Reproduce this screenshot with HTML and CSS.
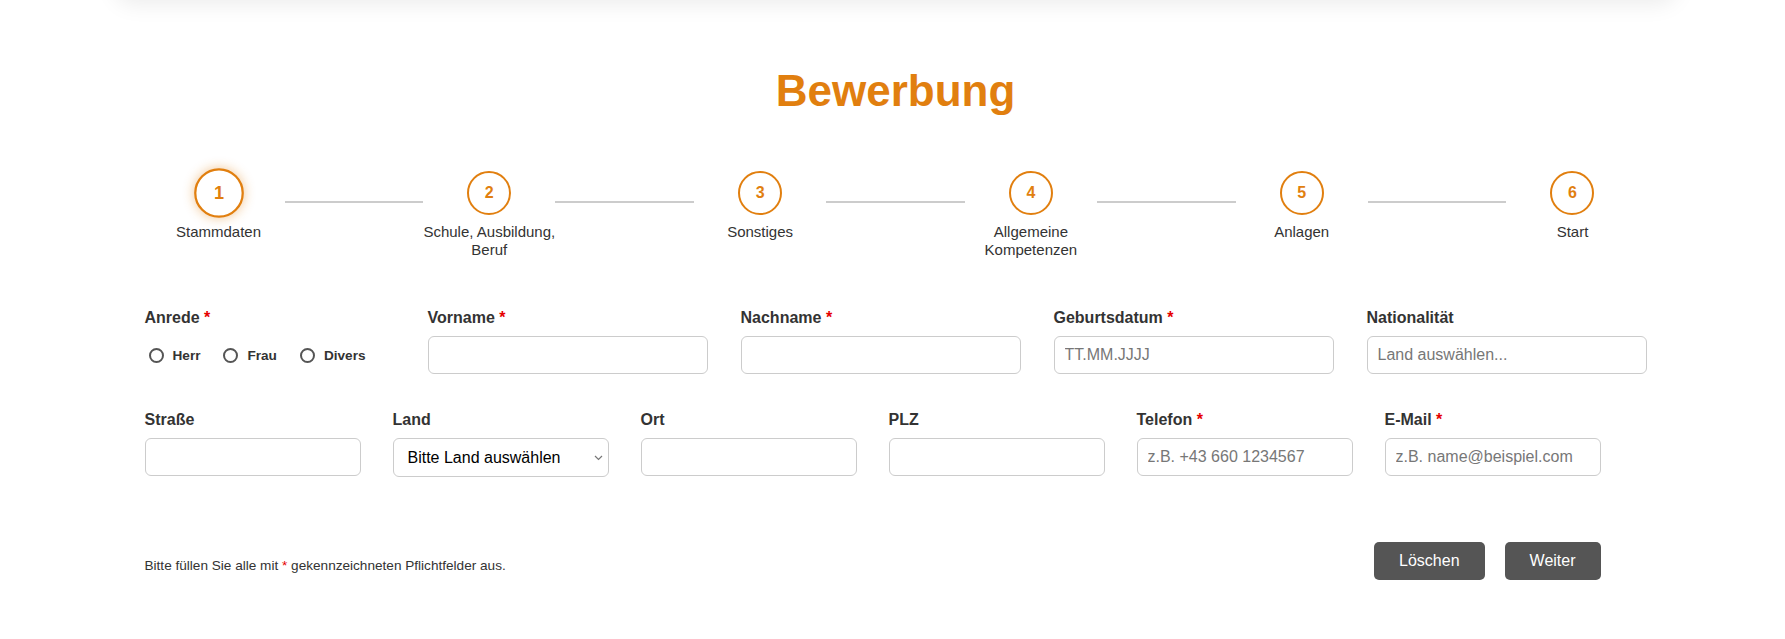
FILE: index.html
```html
<!DOCTYPE html>
<html lang="de">
<head>
  <meta charset="UTF-8" />
  <meta name="viewport" content="width=device-width, initial-scale=1.0"/>
  <title>Bewerbung</title>
  <link rel="stylesheet" href="styles.css">
</head>
<body>
  <div class="topbar"></div>

  <main class="page">
    <h1 class="title">Bewerbung</h1>

    <!-- Steps -->
    <div class="steps">
      <div class="step active">
        <div class="step-circle">1</div>
        <div class="step-label">Stammdaten</div>
      </div>
      <div class="step-line"></div>
      <div class="step">
        <div class="step-circle">2</div>
        <div class="step-label">Schule, Ausbildung, Beruf</div>
      </div>
      <div class="step-line"></div>
      <div class="step">
        <div class="step-circle">3</div>
        <div class="step-label">Sonstiges</div>
      </div>
      <div class="step-line"></div>
      <div class="step">
        <div class="step-circle">4</div>
        <div class="step-label">Allgemeine Kompetenzen</div>
      </div>
      <div class="step-line"></div>
      <div class="step">
        <div class="step-circle">5</div>
        <div class="step-label">Anlagen</div>
      </div>
      <div class="step-line"></div>
      <div class="step">
        <div class="step-circle">6</div>
        <div class="step-label">Start</div>
      </div>
    </div>

    <!-- Stammdaten -->
    <form class="form">
      <div class="row row-main">
        <div class="field">
          <span class="field-label">Anrede <span class="req">*</span></span>
          <div class="radio-group">
            <label class="radio"><input type="radio" name="anrede" value="herr">Herr</label>
            <label class="radio"><input type="radio" name="anrede" value="frau">Frau</label>
            <label class="radio"><input type="radio" name="anrede" value="divers">Divers</label>
          </div>
        </div>
        <div class="field">
          <label class="field-label" for="vorname">Vorname <span class="req">*</span></label>
          <input class="input" id="vorname" type="text" />
        </div>
        <div class="field">
          <label class="field-label" for="nachname">Nachname <span class="req">*</span></label>
          <input class="input" id="nachname" type="text" />
        </div>
        <div class="field">
          <label class="field-label" for="geburtsdatum">Geburtsdatum <span class="req">*</span></label>
          <input class="input" id="geburtsdatum" type="text" placeholder="TT.MM.JJJJ" />
        </div>
        <div class="field">
          <label class="field-label" for="nationalitaet">Nationalität</label>
          <input class="input" id="nationalitaet" type="text" placeholder="Land auswählen..." />
        </div>
      </div>

      <div class="row row-address">
        <div class="field">
          <label class="field-label" for="strasse">Straße</label>
          <input class="input" id="strasse" type="text" />
        </div>
        <div class="field">
          <label class="field-label" for="land">Land</label>
          <div class="select-wrap">
            <select class="input" id="land">
              <option>Bitte Land auswählen</option>
              <option>Österreich</option>
              <option>Deutschland</option>
              <option>Schweiz</option>
            </select>
            <svg class="chevron" width="9" height="6" viewBox="0 0 9 6" aria-hidden="true">
              <path d="M1 1l3.5 3.5L8 1" fill="none" stroke="#777" stroke-width="1.2"/>
            </svg>
          </div>
        </div>
        <div class="field">
          <label class="field-label" for="ort">Ort</label>
          <input class="input" id="ort" type="text" />
        </div>
        <div class="field">
          <label class="field-label" for="plz">PLZ</label>
          <input class="input" id="plz" type="text" />
        </div>
        <div class="field">
          <label class="field-label" for="telefon">Telefon <span class="req">*</span></label>
          <input class="input" id="telefon" type="tel" placeholder="z.B. +43 660 1234567" />
        </div>
        <div class="field">
          <label class="field-label" for="email">E-Mail <span class="req">*</span></label>
          <input class="input" id="email" type="email" placeholder="z.B. name@beispiel.com" />
        </div>
      </div>

      <div class="form-footer">
        <p class="note">Bitte füllen Sie alle mit <span class="req">*</span> gekennzeichneten Pflichtfelder aus.</p>
        <div class="actions">
          <button type="reset" class="btn">Löschen</button>
          <button type="button" class="btn">Weiter</button>
        </div>
      </div>
    </form>
  </main>
</body>
</html>
```

FILE: styles.css
```css
* {
  box-sizing: border-box;
}

body {
  margin: 0;
  padding-left: 6px;
  font-family: 'Liberation Sans', Arial, sans-serif;
  background: #ffffff;
  color: #333;
}

/* header card sits just above the visible area, only its shadow shows */
.topbar {
  width: 1562px;
  height: 40px;
  margin: -40px auto 0;
  background: #ffffff;
  border-radius: 0 0 18px 18px;
  box-shadow: 0 4px 22px rgba(0, 0, 0, 0.08);
}

.page {
  width: 1502px;
  margin: 0 auto;
  padding-top: 65px;
}

.title {
  margin: 0;
  text-align: center;
  font-size: 44px;
  line-height: 52px;
  font-weight: bold;
  color: #e17f0f;
}

/* steps */
.steps {
  display: flex;
  margin: 54px 8px 0;
}

.step {
  flex: none;
  width: 132px;
  display: flex;
  flex-direction: column;
  align-items: center;
}

.step-circle {
  width: 44px;
  height: 44px;
  border: 2px solid #e17f0f;
  border-radius: 50%;
  background: #ffffff;
  display: flex;
  align-items: center;
  justify-content: center;
  font-size: 16px;
  font-weight: bold;
  color: #e17f0f;
}

.step.active .step-circle {
  transform: scale(1.13);
  box-shadow: 0 0 10px rgba(225, 127, 15, 0.45);
}

.step-label {
  width: 150px;
  margin-top: 8px;
  font-size: 15px;
  line-height: 18px;
  text-align: center;
  color: #333;
}

.step-line {
  flex: 1;
  height: 2px;
  margin-top: 30px;
  background: #cccccc;
}

/* form */
.form {
  margin-top: 50px;
}

.row {
  display: grid;
  column-gap: 33px;
}

.row + .row {
  margin-top: 37px;
}

.row-main {
  grid-template-columns: 1fr repeat(4, 280px);
}

.row-address {
  grid-template-columns: repeat(6, 216px);
  column-gap: 32px;
}

.field-label {
  display: block;
  margin-bottom: 9px;
  font-size: 16px;
  line-height: 18px;
  font-weight: bold;
  color: #333;
}

.req {
  color: #e60000;
}

.input {
  display: block;
  width: 100%;
  height: 38px;
  padding: 0 10px;
  border: 1px solid #cccccc;
  border-radius: 6px;
  background: #ffffff;
  font-family: 'Liberation Sans', Arial, sans-serif;
  font-size: 16px;
  color: #333;
}

.input::placeholder {
  color: #777;
}

.select-wrap {
  position: relative;
}

select.input {
  appearance: none;
  height: 39px;
  padding-left: 14px;
  color: #000;
}

.chevron {
  position: absolute;
  right: 6px;
  top: 17px;
  pointer-events: none;
}

.radio-group {
  display: flex;
  align-items: center;
  height: 38px;
}

.radio {
  display: flex;
  align-items: center;
  margin-right: 19px;
  font-size: 13.6px;
  font-weight: bold;
  color: #333;
}

.radio input {
  appearance: none;
  width: 15px;
  height: 15px;
  margin: 0 9px 0 4px;
  border: 2px solid #555;
  border-radius: 50%;
  background: #ffffff;
}

.radio input:checked {
  background: radial-gradient(#555 40%, #ffffff 45%);
}

.form-footer {
  display: flex;
  align-items: center;
  justify-content: space-between;
  max-width: 1456px;
  margin-top: 65px;
}

.note {
  margin: 9px 0 0;
  font-size: 13.6px;
  color: #333;
}

.actions {
  display: flex;
  gap: 20px;
}

.btn {
  height: 38px;
  padding: 0 25px;
  border: none;
  border-radius: 5px;
  background: #555555;
  color: #ffffff;
  font-family: 'Liberation Sans', Arial, sans-serif;
  font-size: 16px;
  cursor: pointer;
}
```
